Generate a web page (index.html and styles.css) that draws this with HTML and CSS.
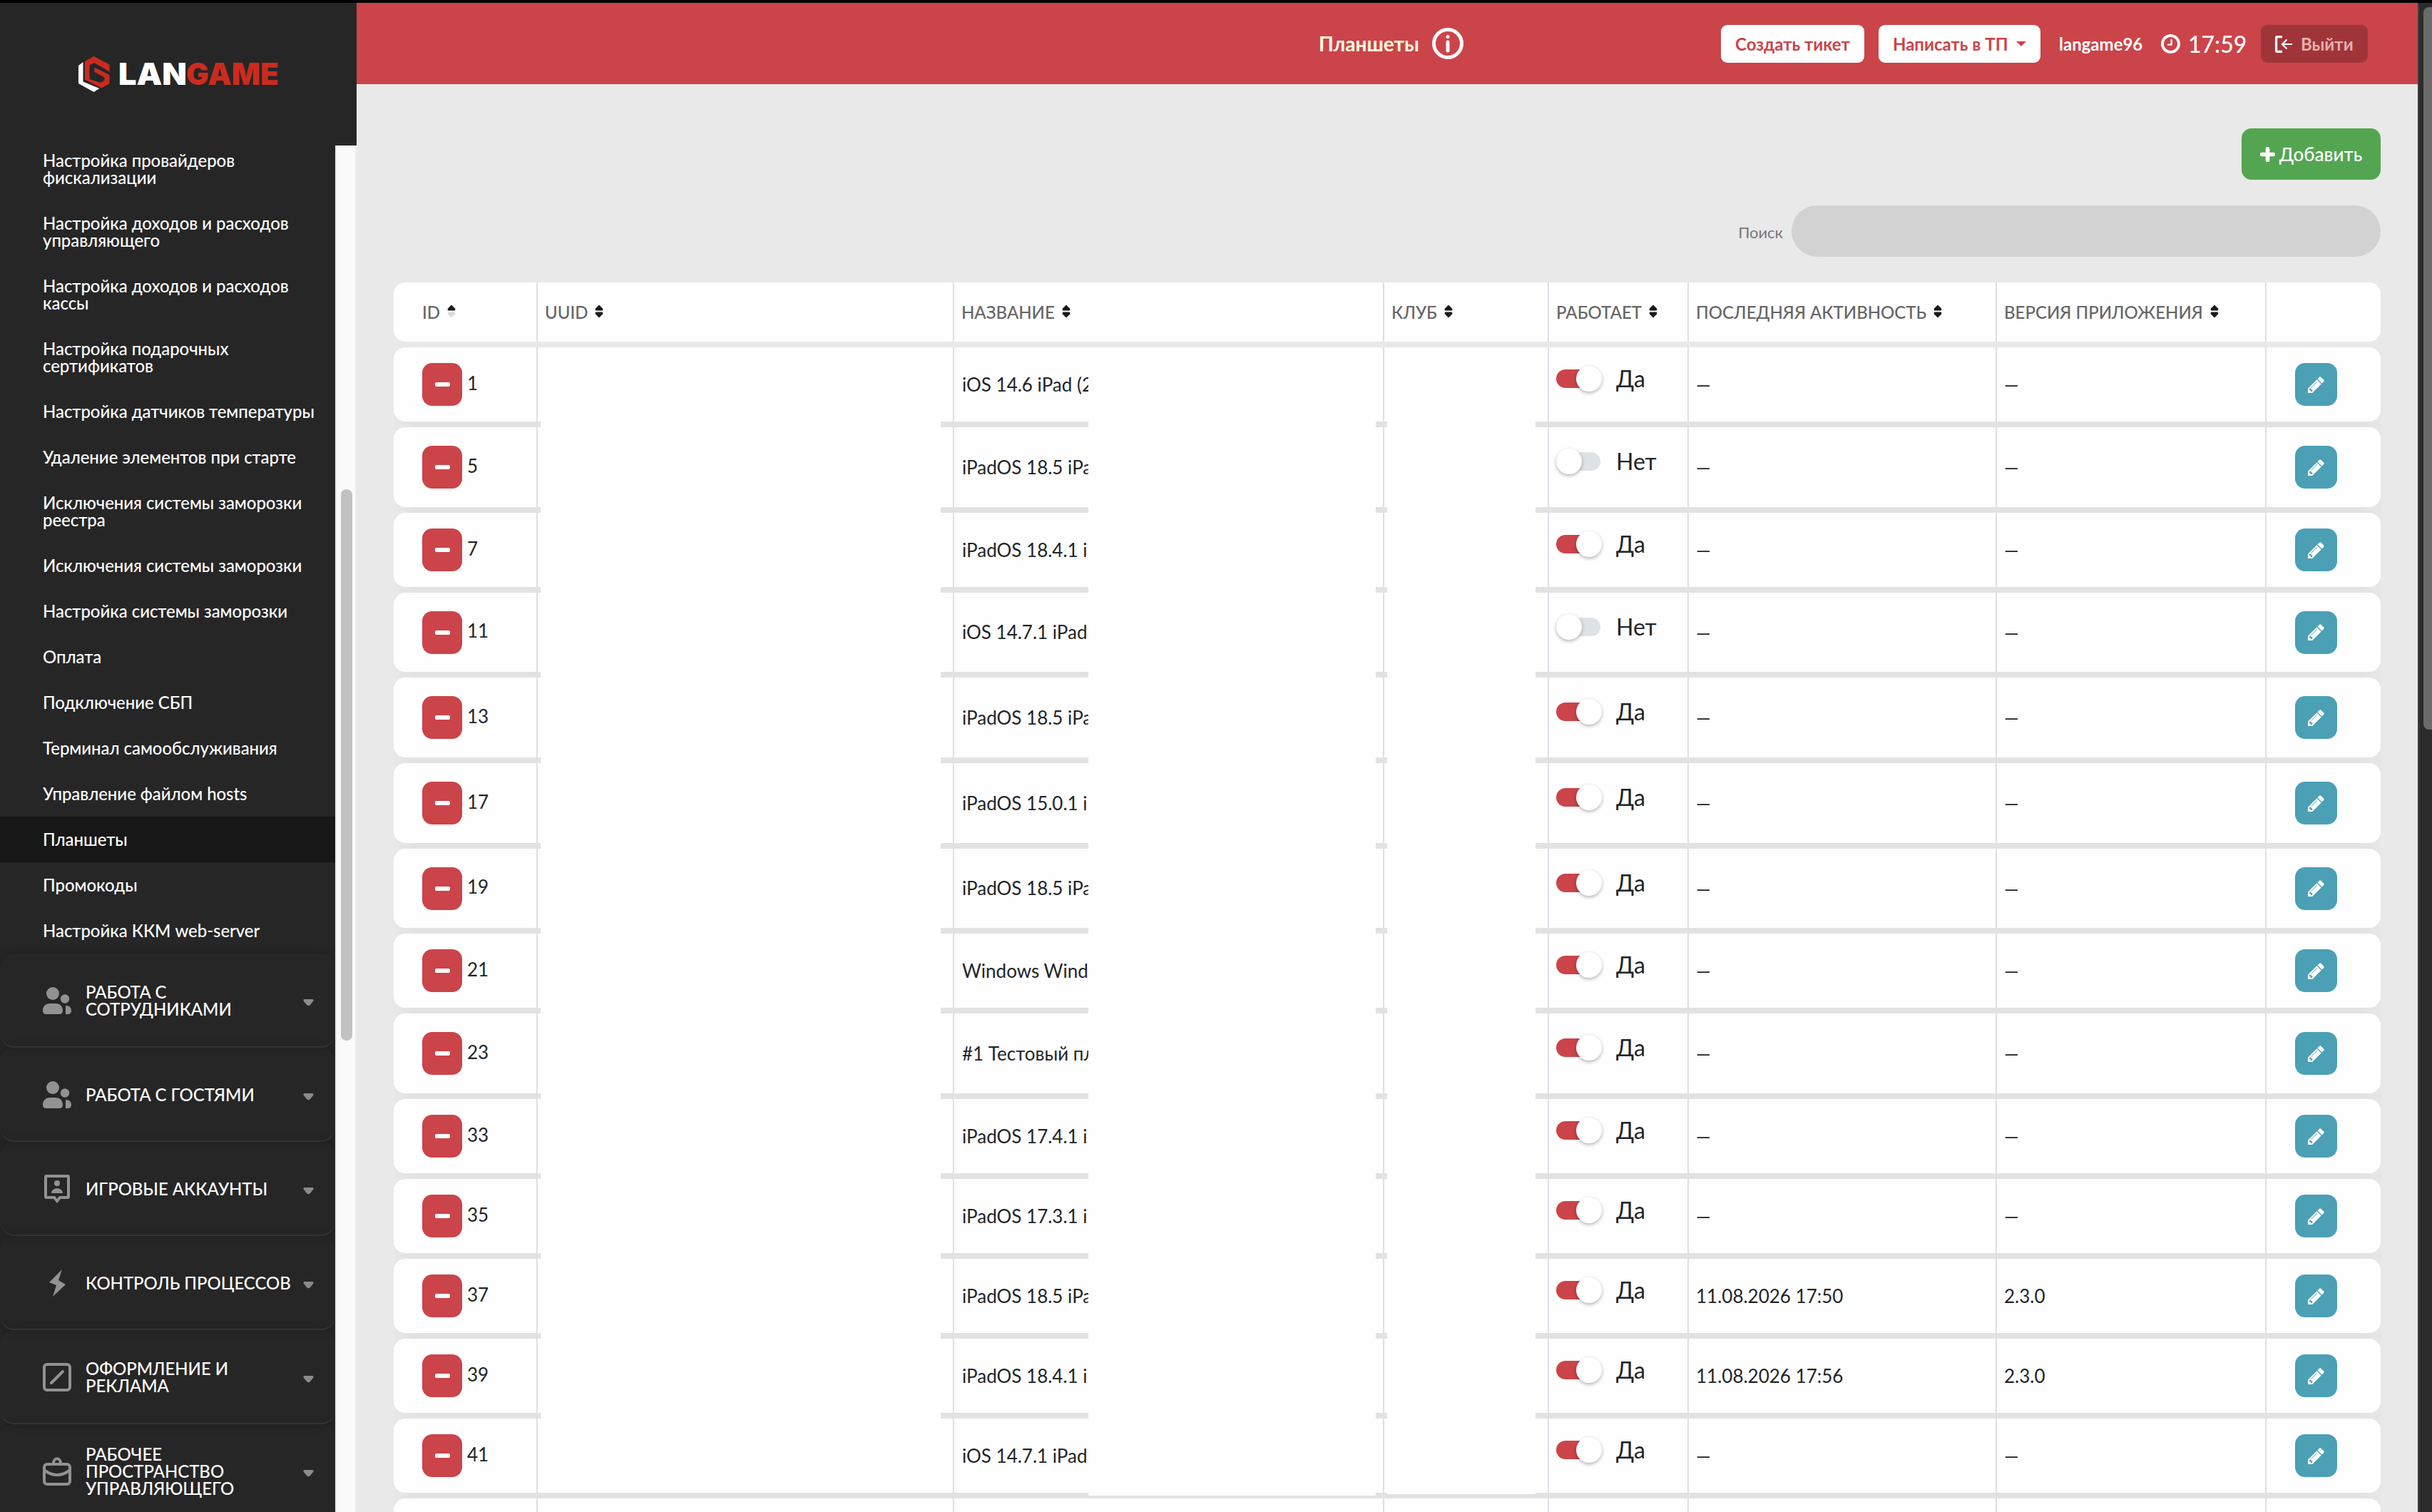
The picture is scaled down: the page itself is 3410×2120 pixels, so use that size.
FILE: index.html
```
<!doctype html>
<html lang="ru">
	<head>
		<meta charset="utf-8">
		<title>Планшеты</title>
		<link rel="stylesheet" href="styles.css">
	</head>
	<body>
		<svg class="sprite">
			<symbol id="pencil" viewBox="0 128 1536 1536"><path d="M363 1536l91-91-235-235-91 91v107h128v128h107zM886 608q0-22-22-22-10 0-17 7l-542 542q-7 7-7 17 0 22 22 22 10 0 17-7l542-542q7-7 7-17zM832 416l416 416-832 832h-416v-416zM1515 512q0 53-37 90l-166 166-416-416 166-165q36-38 90-38 53 0 91 38l235 234q37 39 37 91z"/></symbol>
			<symbol id="sort" viewBox="0 0 12 19"><path class="up" d="M6 0.5L11 5.5Q12 8.5 10 8.5H2Q0 8.5 1 5.5Z"/><path class="down" d="M6 18.5L11 13.5Q12 10.5 10 10.5H2Q0 10.5 1 13.5Z"/></symbol>
			<symbol id="sort-asc" viewBox="0 0 12 19"><path d="M6 0.5L11 5.5Q12 8.5 10 8.5H2Q0 8.5 1 5.5Z"/><path fill="#dcdcdc" d="M6 18.5L11 13.5Q12 10.5 10 10.5H2Q0 10.5 1 13.5Z"/></symbol>
			<symbol id="caret" viewBox="0 0 15 10"><path d="M1.5 0H13.5Q15.5 1 14 3L9.5 8.5Q7.5 10 5.500 8.500L1 3Q-.5 1 1.500 0Z"/></symbol>
			<symbol id="people" viewBox="0 0 40 38"><circle cx="14" cy="9" r="9"/><circle cx="31" cy="16.500" r="6.200"/><path d="M10 23H18C24 23 28 27 28 33Q28 38 23 38H5Q0 38 0 33C0 27 4 23 10 23ZM32 26Q40 26 40 33Q40 38 35 38H32Z"/></symbol>
			<symbol id="badge" viewBox="0 0 40 40"><path fill-rule="evenodd" d="M5 0H35Q38 0 38 3V31Q38 34 35 34H25L20 40L15 34H5Q2 34 2 31V3Q2 0 5 0ZM6 4V30H17L20 34L23 30H34V4Z"/><circle cx="20" cy="12" r="4"/><path d="M12 26C12 17 28 17 28 26Z"/></symbol>
			<symbol id="bolt" viewBox="0 0 40 38"><path d="M27 0L9 18L19 22L14 38L32 21L22 15Z"/></symbol>
			<symbol id="design" viewBox="0 0 40 40"><rect class="line" x="2" y="2" width="36" height="36" rx="4"/><path class="line" d="M12 28L28 12"/></symbol>
			<symbol id="case" viewBox="0 0 40 40"><rect class="line" x="2" y="10" width="36" height="28" rx="4"/><path class="line" d="M15 9C15 0 25 0 25 9M3 19Q20 31 37 19"/></symbol>
		</svg>
		<div class="topline"></div>
		<div class="app">
			<aside class="sidebar">
				<div class="logo">
					<svg width="290" height="60" viewBox="0 0 290 60">
						<path fill="#fff" d="M0 18L6.500 13V40.500L29.500 50L21.500 55L0 43Z"/>
						<path fill="#cb2b1e" d="M21.500 5L43.500 16.500V26.500L22 14L15.500 17.500V37L31 42L36.500 38.500V34.500L22.500 27V20.500L43.500 31V43L32.500 49.500L9 37.500V12Z"/>
						<text class="word lan" x="56" y="45" textLength="96" lengthAdjust="spacingAndGlyphs">LAN</text>
						<text class="word game" x="151" y="45" textLength="130" lengthAdjust="spacingAndGlyphs">GAME</text>
					</svg>
				</div>
				<div class="nav">
					<div class="menu">
						<ul class="submenu">
							<li>Настройка провайдеров фискализации</li>
							<li>Настройка доходов и расходов управляющего</li>
							<li>Настройка доходов и расходов кассы</li>
							<li>Настройка подарочных сертификатов</li>
							<li>Настройка датчиков температуры</li>
							<li>Удаление элементов при старте</li>
							<li>Исключения системы заморозки реестра</li>
							<li>Исключения системы заморозки</li>
							<li>Настройка системы заморозки</li>
							<li>Оплата</li>
							<li>Подключение СБП</li>
							<li>Терминал самообслуживания</li>
							<li>Управление файлом hosts</li>
							<li class="active">Планшеты</li>
							<li>Промокоды</li>
							<li>Настройка ККМ web-server</li>
						</ul>
						<div class="group"><svg class="gicon"><use href="#people"/></svg><span>РАБОТА С СОТРУДНИКАМИ</span><svg class="caret"><use href="#caret"/></svg></div>
						<div class="group"><svg class="gicon"><use href="#people"/></svg><span>РАБОТА С ГОСТЯМИ</span><svg class="caret"><use href="#caret"/></svg></div>
						<div class="group"><svg class="gicon"><use href="#badge"/></svg><span>ИГРОВЫЕ АККАУНТЫ</span><svg class="caret"><use href="#caret"/></svg></div>
						<div class="group"><svg class="gicon"><use href="#bolt"/></svg><span>КОНТРОЛЬ ПРОЦЕССОВ</span><svg class="caret"><use href="#caret"/></svg></div>
						<div class="group"><svg class="gicon"><use href="#design"/></svg><span>ОФОРМЛЕНИЕ И РЕКЛАМА</span><svg class="caret"><use href="#caret"/></svg></div>
						<div class="group"><svg class="gicon"><use href="#case"/></svg><span>РАБОЧЕЕ ПРОСТРАНСТВО УПРАВЛЯЮЩЕГО</span><svg class="caret"><use href="#caret"/></svg></div>
					</div>
					<div class="menu-scroll"><div class="menu-thumb"></div></div>
				</div>
			</aside>
			<main class="main">
				<header class="header">
					<h1>Планшеты</h1>
					<svg class="info" viewBox="0 0 44 44"><circle cx="22" cy="22" r="19.500"/><circle class="dot" cx="22" cy="12.500" r="2.500"/><path d="M22 20V32"/></svg>
					<div class="tools">
						<button class="btn ticket">Создать тикет</button>
						<button class="btn support">Написать в ТП <i></i></button>
						<span class="user">langame96</span>
						<svg class="clock" viewBox="0 128 1536 1536"><path d="M896 544v448q0 14-9 23t-23 9h-320q-14 0-23-9t-9-23v-64q0-14 9-23t23-9h224v-352q0-14 9-23t23-9h64q14 0 23 9t9 23zM1312 896q0-148-73-273t-198-198-273-73-273 73-198 198-73 273 73 273 198 198 273 73 273-73 198-198 73-273zM1536 896q0 209-103 385.500t-279.500 279.500-385.500 103-385.500-103-279.500-279.500-103-385.500 103-385.500 279.500-279.500 385.500-103 385.500 103 279.500 279.500 103 385.500z"/></svg>
						<span class="time">17:59</span>
						<button class="btn exit"><svg viewBox="0 0 24 24"><path stroke-width="3.200" d="M10 1.600H3Q1.600 1.600 1.600 3V21Q1.600 22.400 3 22.400H10"/><path stroke-width="2.200" d="M24 12H10M16.500 5.500L10 12L16.500 18.500"/></svg>Выйти</button>
					</div>
				</header>
				<div class="content">
					<button class="add"><svg viewBox="0 0 20 20"><path d="M10 2.500V17.500M2.500 10H17.500"/></svg>Добавить</button>
					<div class="search"><label for="q">Поиск</label><input id="q" type="text"></div>
					<div class="table">
						<div class="row head">
							<div>ID<svg class="sort"><use href="#sort-asc"/></svg></div>
							<div>UUID<svg class="sort"><use href="#sort"/></svg></div>
							<div>НАЗВАНИЕ<svg class="sort"><use href="#sort"/></svg></div>
							<div>КЛУБ<svg class="sort"><use href="#sort"/></svg></div>
							<div>РАБОТАЕТ<svg class="sort"><use href="#sort"/></svg></div>
							<div>ПОСЛЕДНЯЯ АКТИВНОСТЬ<svg class="sort"><use href="#sort"/></svg></div>
							<div>ВЕРСИЯ ПРИЛОЖЕНИЯ<svg class="sort"><use href="#sort"/></svg></div>
							<div></div>
						</div>
						<div class="rows" id="rows"></div>
						<div class="cover cover-uuid"></div>
						<div class="cover cover-name"></div>
						<div class="cover cover-club"></div>
					</div>
				</div>
			</main>
			<div class="page-scroll"><div class="page-thumb"></div></div>
		</div>
		<script>
(function(){
    // id, name, enabled, row height, last activity, version
    var tablets = [
        [1, "iOS 14.6 iPad (2", true, 104],
        [5, "iPadOS 18.5 iPa", false, 112],
        [7, "iPadOS 18.4.1 i", true, 104],
        [11, "iOS 14.7.1 iPad", false, 111],
        [13, "iPadOS 18.5 iPa", true, 112],
        [17, "iPadOS 15.0.1 i", true, 112],
        [19, "iPadOS 18.5 iPa", true, 111],
        [21, "Windows Wind", true, 104],
        [23, "#1 Тестовый пл", true, 112],
        [33, "iPadOS 17.4.1 i", true, 104],
        [35, "iPadOS 17.3.1 i", true, 104],
        [37, "iPadOS 18.5 iPa", true, 104, "11.08.2026 17:50", "2.3.0"],
        [39, "iPadOS 18.4.1 i", true, 104, "11.08.2026 17:56", "2.3.0"],
        [41, "iOS 14.7.1 iPad", true, 104]
    ];
    var html = "", i, t;
    for (i = 0; i < tablets.length; i++) {
        t = tablets[i];
        html += '<div class="row" style="height:' + t[3] + 'px">' +
            '<div><button class="del"><i></i></button><span class="num">' + t[0] + '</span></div>' +
            '<div></div><div class="name">' + t[1] + '</div><div></div>' +
            '<div class="state"><span class="switch' + (t[2] ? " on" : "") + '"><i></i></span>' + (t[2] ? "Да" : "Нет") + '</div>' +
            '<div>' + (t[4] || "—") + '</div><div>' + (t[5] || "—") + '</div>' +
            '<div class="act"><button class="edit"><svg><use href="#pencil"/></svg></button></div></div>';
    }
    html += '<div class="row next"><div></div><div></div><div></div><div></div><div></div><div></div><div></div><div></div></div>';
    document.getElementById("rows").innerHTML = html;
})();
		</script>
	</body>
</html>
```
FILE: styles.css
```
* {
    box-sizing: border-box;
}
html, body {
    margin: 0;
    padding: 0;
    height: 100%;
    overflow: hidden;
}
body {
    background: #e9e9e9;
    color: #212529;
    font-family: Lato, "Open Sans", sans-serif;
    font-size: 26px;
    display: flex;
    flex-direction: column;
}
button, input {
    border: 0;
    padding: 0;
    font-family: inherit;
}
.sprite {
    position: absolute;
    width: 0;
    height: 0;
}
.topline {
    height: 4px;
    flex: none;
    background: #000;
}
.app {
    flex: 1;
    min-height: 0;
    display: flex;
}

/* sidebar */
.sidebar {
    width: 500px;
    flex: none;
    display: flex;
    flex-direction: column;
}
.logo {
    height: 200px;
    flex: none;
    padding: 70px 0 0 110px;
    background: #262626;
}
.word {
    font-family: Inter, sans-serif;
    font-weight: 900;
    font-size: 42px;
}
.lan {
    fill: #fff;
}
.game {
    fill: #cb2b1e;
}
.nav {
    flex: 1;
    min-height: 0;
    display: flex;
    overflow: hidden;
}
.menu {
    width: 470px;
    background: #262626;
    color: #fff;
    font-size: 24px;
    font-weight: 500;
    line-height: 24px;
    letter-spacing: -0.06px;
    overflow: hidden;
}
.submenu {
    list-style: none;
    margin: -11px 0 0;
    padding: 0;
}
.submenu li {
    padding: 20px 18px 20px 60px;
}
.submenu .active {
    background: #171717;
}
.group {
    height: 132px;
    display: flex;
    align-items: center;
    padding: 1px 0 0 60px;
    border-bottom: 2px solid #383838;
    border-radius: 20px;
    box-shadow: 0 0 14px rgba(0, 0, 0, 0.18);
}
.group span {
    width: 305px;
    padding-right: 10px;
}
.gicon {
    width: 40px;
    height: 40px;
    margin-right: 20px;
    fill: #929292;
}
.gicon .line, .line {
    fill: none;
    stroke: #929292;
    stroke-width: 4;
    stroke-linecap: round;
}
.caret {
    width: 15px;
    height: 10px;
    margin-top: 6px;
    fill: #8a8a8a;
}
.menu-scroll {
    width: 30px;
    padding: 482px 6px 0;
    background: #fafafa;
    border-left: 2px solid #e8e8e8;
    border-right: 2px solid #ededed;
}
.menu-thumb {
    width: 16px;
    height: 773px;
    border-radius: 8px;
    background: #c1c1c1;
}

/* header */
.main {
    flex: 1;
    min-width: 0;
}
.header {
    height: 114px;
    padding: 0 70px 0 1349px;
    display: flex;
    align-items: center;
    background: #cb444a;
    color: #fff;
}
.header h1 {
    margin: 0;
    width: 159px;
    color: #ffffe0;
    font-size: 28px;
    font-weight: 700;
    line-height: 34px;
}
.info {
    width: 44px;
    height: 44px;
    fill: none;
    stroke: #fafaff;
    stroke-width: 5;
    stroke-linecap: round;
}
.info .dot {
    fill: #fafaff;
    stroke: none;
}
.tools {
    margin-left: auto;
    display: flex;
    align-items: center;
}
.btn {
    height: 53px;
    border-radius: 9px;
    background: #fff;
    color: #cb444a;
    font-size: 24px;
    font-weight: 700;
    white-space: nowrap;
    display: flex;
    align-items: center;
}
.ticket {
    width: 201px;
    justify-content: center;
    margin-right: 20px;
}
.support {
    width: 227px;
    padding: 0 20px;
    justify-content: space-between;
}
.support i {
    border: 7px solid transparent;
    border-top-color: #cb444a;
    border-bottom: 0;
}
.user {
    width: 169px;
    padding-left: 26px;
    font-size: 24px;
    font-weight: 700;
}
.clock {
    width: 27px;
    height: 27px;
    fill: #fff;
}
.time {
    width: 113px;
    padding-left: 11px;
    font-size: 32px;
    font-weight: 500;
}
.exit {
    width: 150px;
    padding-left: 20px;
    background: #a03539;
    color: #e8aeb1;
}
.exit svg {
    width: 24px;
    height: 24px;
    margin: 2px 12px 0 0;
    fill: none;
    stroke: #fff;
}

/* content */
.content {
    padding: 62px 52px 0;
    display: flex;
    flex-direction: column;
    align-items: flex-end;
}
.add {
    width: 195px;
    height: 72px;
    border-radius: 14px;
    background: #54a551;
    color: #fff;
    font-size: 26px;
    font-weight: 500;
    display: flex;
    align-items: center;
    justify-content: center;
    gap: 6px;
}
.add svg {
    width: 21px;
    height: 21px;
    stroke: #fff;
    stroke-width: 5.400;
    stroke-linecap: round;
}
.search {
    margin-top: 36px;
    display: flex;
    align-items: center;
    gap: 12px;
    color: #777;
    font-size: 22px;
}
.search label {
    padding-top: 3px;
}
.search input {
    width: 826px;
    height: 72px;
    border-radius: 36px;
    background: #d2d2d2;
}

/* table */
.table {
    position: relative;
    width: 2786px;
    margin-top: 36px;
}
.row {
    display: grid;
    grid-template-columns: 200px 584px 603px 231px 196px 432px 378px 162px;
    background: #fefefe;
    border-radius: 16px;
}
.row > div {
    display: flex;
    align-items: center;
    padding-left: 10px;
    border-left: 2px solid #dee0e6;
    white-space: nowrap;
}
.row > div:first-child {
    padding-left: 40px;
    border-left: 0;
}
.head {
    height: 83px;
    margin-bottom: 8px;
    color: #666;
    font-size: 24px;
    font-weight: 500;
}
.sort {
    width: 12px;
    height: 19px;
    margin: 0 0 3px 10px;
    fill: #1a1a1a;
}
.rows {
    display: flex;
    flex-direction: column;
    gap: 8px;
    background: linear-gradient(90deg, #e8e8e8, #e2e2e2 30px, #e2e2e2 2756px, #e7e7e7);
    border-radius: 16px 16px 0 0;
}
.next {
    height: 104px;
}
.del, .edit {
    height: 60px;
    border-radius: 14px;
    display: flex;
    align-items: center;
    justify-content: center;
}
.del {
    width: 56px;
    background: #cb444a;
}
.del i {
    width: 21px;
    height: 6px;
    border-radius: 2px;
    background: #fff;
}
.num {
    padding: 0 0 5px 7px;
}
.row .name {
    padding-left: 11px;
    padding-bottom: 1px;
}
.row .state {
    padding-bottom: 16px;
    font-size: 32px;
    line-height: 36px;
}
.switch {
    width: 62px;
    height: 26px;
    margin-right: 22px;
    border-radius: 13px;
    background: #dee2e6;
    display: flex;
    align-items: center;
}
.switch i {
    width: 36px;
    height: 36px;
    flex: none;
    border-radius: 50%;
    background: #fff;
    box-shadow: 0 2px 5px rgba(0, 0, 0, 0.3);
}
.switch.on {
    background: #cb444a;
}
.switch.on i {
    margin-left: 28px;
}
.row .act {
    padding-left: 40px;
}
.edit {
    width: 59px;
    background: #4ba0b6;
}
.edit svg {
    width: 23px;
    height: 23px;
    fill: #fff;
}
.cover {
    position: absolute;
    top: 120px;
    background: #fefefe;
}
.cover-uuid {
    left: 206px;
    width: 561px;
    height: 1570px;
}
.cover-name {
    left: 974px;
    width: 403px;
    height: 1581px;
}
.cover-club {
    left: 1393px;
    width: 208px;
    height: 1579px;
}

/* browser scrollbar */
.page-scroll {
    width: 20px;
    flex: none;
    padding: 6px 0 0 6px;
    background: #2c2c2c;
    border-left: 2px solid #3e3e3e;
}
.page-thumb {
    height: 1013px;
    border-radius: 8px 0 0 8px;
    background: #6b6b6b;
}
```
